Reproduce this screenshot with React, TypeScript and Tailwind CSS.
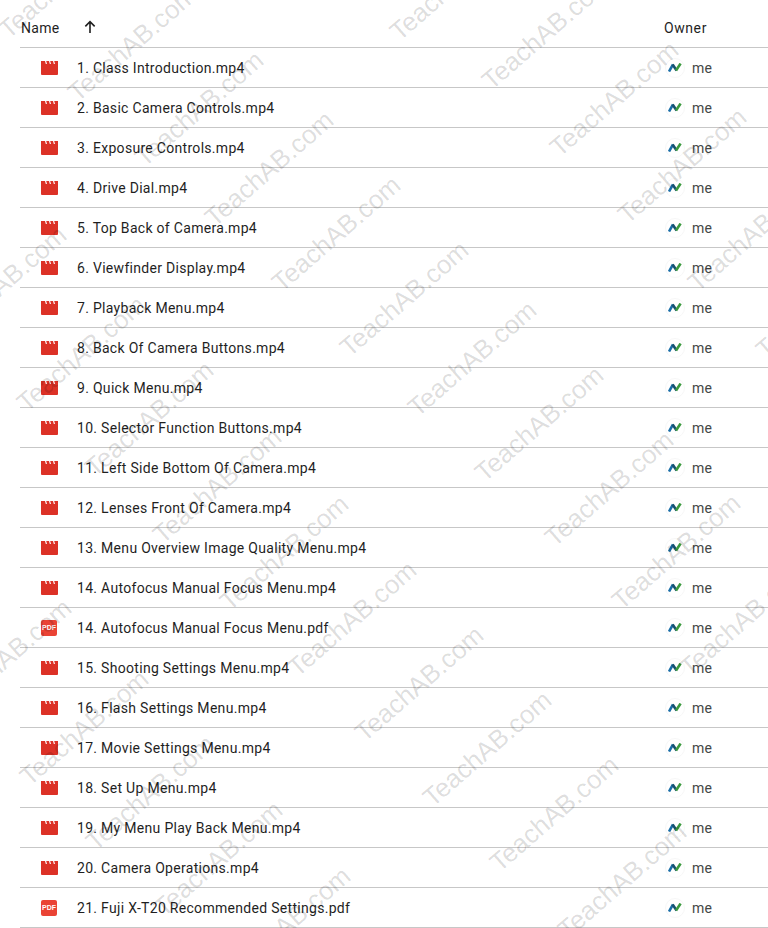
const files = [
  "1. Class Introduction.mp4",
  "2. Basic Camera Controls.mp4",
  "3. Exposure Controls.mp4",
  "4. Drive Dial.mp4",
  "5. Top Back of Camera.mp4",
  "6. Viewfinder Display.mp4",
  "7. Playback Menu.mp4",
  "8. Back Of Camera Buttons.mp4",
  "9. Quick Menu.mp4",
  "10. Selector Function Buttons.mp4",
  "11. Left Side Bottom Of Camera.mp4",
  "12. Lenses Front Of Camera.mp4",
  "13. Menu Overview Image Quality Menu.mp4",
  "14. Autofocus Manual Focus Menu.mp4",
  "14. Autofocus Manual Focus Menu.pdf",
  "15. Shooting Settings Menu.mp4",
  "16. Flash Settings Menu.mp4",
  "17. Movie Settings Menu.mp4",
  "18. Set Up Menu.mp4",
  "19. My Menu Play Back Menu.mp4",
  "20. Camera Operations.mp4",
  "21. Fuji X-T20 Recommended Settings.pdf",
];

// bottom of the T's stem for each watermark, read off the picture
const marks: [number, number][] = [
  [14, 35], [405, 37],
  [497, 86], [565, 153], [633, 220], [703, 288], [771, 355],
  [83, 98], [150, 163], [220, 223], [287, 288], [355, 353], [423, 413], [490, 478], [560, 543], [627, 606], [695, 673],
  [-47, 338], [32, 408], [100, 473], [168, 540], [235, 607], [303, 673], [370, 738], [438, 803], [505, 868], [573, 935],
  [-42, 711], [35, 782], [101, 847], [169, 913], [237, 979],
];

function VideoIcon() {
  return (
    <svg width="17" height="14" viewBox="0 0 17 14" className="shrink-0">
      <path d="M0 0H17V13A1 1 0 0 1 16 14H1A1 1 0 0 1 0 13Z" fill="#dc3126" />
      <path d="M4 0l.8 3h1.2l-.8-3zM8 0l.8 3h1.2l-.8-3zM12 0l.8 3h1.2l-.8-3z" fill="#fff" />
    </svg>
  );
}

function PdfIcon() {
  return (
    <div className="w-4 h-4 shrink-0 rounded-[2px] bg-[#ea4335] flex items-center justify-center text-white text-[7px] font-bold leading-none tracking-normal font-['Liberation_Sans',sans-serif]">
      PDF
    </div>
  );
}

function OwnerLogo() {
  return (
    <div className="w-5 h-5 shrink-0 rounded-full border border-[#f7f7f7] flex items-center justify-center">
      <svg width="14" height="9" viewBox="0 0 14 9">
        <path d="M1 8.5L5 1.5" fill="none" stroke="#1b6fa8" strokeWidth="2.6" />
        <path d="M4.6 1.5L8.6 7.5" fill="none" stroke="#17516f" strokeWidth="2.6" />
        <path d="M8 7.5L12.6 0.5" fill="none" stroke="#3c9a3f" strokeWidth="2.6" />
      </svg>
    </div>
  );
}

export default function App() {
  return (
    <div className="relative w-[768px] h-[928px] overflow-hidden bg-white font-['Roboto',sans-serif] text-sm tracking-[0.3px] text-[#1f1f1f]">
      <div className="ml-5">
        <div className="h-12 pt-2 flex items-center border-b border-[#c7c7c7]">
          <span className="ml-px">Name</span>
          <svg width="16" height="16" viewBox="0 0 24 24" className="ml-[22px] -mt-[2px] text-[#1f1f1f]" fill="none" stroke="currentColor" strokeWidth="2.4">
            <path d="M12 21V4M5 11l7-7 7 7" />
          </svg>
          <span className="ml-auto mr-[61px] tracking-[0.6px]">Owner</span>
        </div>
        {files.map((name) => (
          <div key={name} className="h-10 flex items-center border-b border-[#c7c7c7]">
            <div className="ml-[21px] w-4 flex justify-center">
              {name.endsWith(".pdf") ? <PdfIcon /> : <VideoIcon />}
            </div>
            <span className="ml-5">{name}</span>
            <div className="ml-auto flex items-center w-[103px]">
              <OwnerLogo />
              <span className="ml-[7px] text-[#444746]">me</span>
            </div>
          </div>
        ))}
      </div>
      {marks.map(([x, y]) => (
        <div
          key={`${x}-${y}`}
          className="absolute origin-bottom-left -rotate-[41deg] text-[26px] leading-none tracking-normal whitespace-nowrap text-black/[0.14] font-['Liberation_Sans',sans-serif] pointer-events-none"
          style={{ left: x - 3, top: y - 18 }}
        >
          TeachAB.com
        </div>
      ))}
    </div>
  );
}
